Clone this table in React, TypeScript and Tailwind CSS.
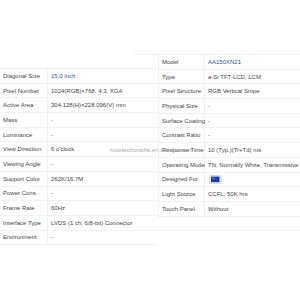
const left: [string, string, boolean?][] = [
  ['Diagonal Size', '15.0 inch', true],
  ['Pixel Number', '1024(RGB)×768, 4:3, XGA'],
  ['Active Area', '304.128(H)×228.096(V) mm'],
  ['Mass', '-'],
  ['Luminance', '-'],
  ['View Direction', '6 o\'clock'],
  ['Viewing Angle', '-'],
  ['Support Color', '262K/16.7M'],
  ['Power Cons.', '-'],
  ['Frame Rate', '60Hz'],
  ['Interface Type', 'LVDS (1 ch, 6/8-bit) Connector'],
  ['Environment', '-'],
];

const right: [string, string, boolean?][] = [
  ['Model', 'AA150XN21', true],
  ['Type', 'a-Si TFT-LCD, LCM'],
  ['Pixel Structure', 'RGB Vertical Stripe'],
  ['Physical Size', '-'],
  ['Surface Coating', '-'],
  ['Contrast Ratio', '-'],
  ['Response Time', '10 (Typ.)(Tr+Td) ms'],
  ['Operating Mode', 'TN, Normally White, Transmissive'],
  ['Designed For', ''],
  ['Light Source', 'CCFL, 50K hrs'],
  ['Touch Panel', 'Without'],
];

const MonitorIcon = () => (
  <svg width="13" height="9" viewBox="0 0 13 9">
    <rect x="0.5" y="0.5" width="12" height="8" rx="1" fill="#e6e8ee" stroke="#c8ccd6" strokeWidth="0.6" />
    <rect x="2" y="1.6" width="8.5" height="5.6" fill="#1d3f9e" />
    <rect x="3" y="2.4" width="3" height="1.6" fill="#4d72d8" />
  </svg>
);

const App = () => {
  return (
    <div
      className="relative w-[300px] h-[300px] overflow-hidden bg-white text-[6px] leading-none text-[#444]"
      style={{ fontFamily: '"Liberation Sans", Arial, sans-serif' }}
    >
      <div className="flex pt-[54px]">
        <div className="w-[158px] shrink-0">
          <div className="h-[14px] ml-[133px] border-t border-[#f1f1f1]" />
          <div className="border-t border-[#f1f1f1]">
            {left.map(([k, v, blue]) => (
              <div key={k} className="flex h-[14.7px] border-b border-[#f1f1f1]">
                <div className="w-[48px] shrink-0 pl-[3px] flex items-center border-r border-[#f1f1f1]">{k}</div>
                <div className={`pl-[3px] flex items-center whitespace-nowrap ${blue ? 'text-[#2452a3]' : ''}`}>{v}</div>
              </div>
            ))}
          </div>
        </div>
        <div className="flex-1 border-t border-[#f1f1f1]">
          {right.map(([k, v, blue]) => (
            <div key={k} className="flex h-[14.7px] border-b border-[#f1f1f1]">
              <div className="w-[47px] shrink-0 pl-[3px] flex items-center border-l border-r border-[#f1f1f1] whitespace-nowrap">{k}</div>
              <div className={`pl-[3px] flex items-center whitespace-nowrap ${blue ? 'text-[#2452a3]' : ''}`}>
                {k === 'Designed For' ? <div className="pl-[1px]"><MonitorIcon /></div> : v}
              </div>
            </div>
          ))}
          <div className="h-[14.7px] border-b border-[#f1f1f1]" />
        </div>
      </div>
      <div className="absolute left-[110px] top-[147px] text-[6px] text-[#ababab] whitespace-nowrap">
        roselectronichk.en.alibaba.com
      </div>
    </div>
  );
};

export default App;
